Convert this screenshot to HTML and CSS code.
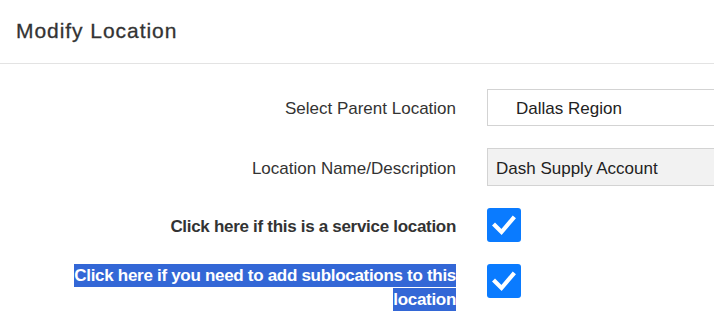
FILE: index.html
```html
<!DOCTYPE html>
<html>
<head>
<meta charset="utf-8">
<link rel="stylesheet" href="styles.css">
</head>
<body>
<div class="page">
  <header class="header">
    <h1 class="title">Modify Location</h1>
  </header>
  <form class="form">
    <div class="row row-center">
      <label class="label">Select Parent Location</label>
      <div class="field field-select">Dallas Region</div>
    </div>
    <div class="row row-center">
      <label class="label">Location Name/Description</label>
      <div class="field field-text">Dash Supply Account</div>
    </div>
    <div class="row row-center">
      <label class="label label-strong">Click here if this is a service location</label>
      <span class="check"><svg viewBox="0 0 34 34" width="34" height="34"><path d="M8 17.5 L14.5 24 L26 10.5" fill="none" stroke="#fff" stroke-width="4.2" stroke-linecap="square" stroke-linejoin="miter"/></svg></span>
    </div>
    <div class="row row-start">
      <label class="label label-strong label-sel"><span class="selected">Click here if you need to add sublocations to this location</span></label>
      <span class="check"><svg viewBox="0 0 34 34" width="34" height="34"><path d="M8 17.5 L14.5 24 L26 10.5" fill="none" stroke="#fff" stroke-width="4.2" stroke-linecap="square" stroke-linejoin="miter"/></svg></span>
    </div>
  </form>
</div>
</body>
</html>
```
FILE: styles.css
```css
html, body {
  margin: 0;
  padding: 0;
  background: #fff;
  overflow: hidden;
}
body {
  font-family: "Liberation Sans", Arial, sans-serif;
  color: #333;
}
.page {
  width: 714px;
}
.header {
  height: 63px;
  border-bottom: 1px solid #e3e3e3;
  display: flex;
  align-items: center;
  padding-left: 16px;
}
.title {
  margin: 0;
  margin-top: -2px;
  font-size: 21px;
  font-weight: 500;
  letter-spacing: 0.95px;
  color: #333;
  -webkit-text-stroke: 0.3px #333;
}
.form {
  display: flex;
  flex-direction: column;
  gap: 22px;
  padding-top: 25px;
}
.row {
  display: grid;
  grid-template-columns: 390px 1fr;
  column-gap: 31px;
  padding-left: 66px;
}
.row-center { align-items: center; }
.row-start { align-items: start; }
.label {
  text-align: right;
  font-size: 17px;
  line-height: 24px;
  color: #333;
  padding-top: 3px;
}
.label-sel {
  padding-top: 0;
}
.label-strong {
  font-weight: 700;
  letter-spacing: -0.3px;
}
.selected {
  background: #3367d6;
  color: #fff;
  padding: 2px 0;
  -webkit-box-decoration-break: clone;
  box-decoration-break: clone;
}
.field {
  box-sizing: border-box;
  border: 1px solid #d3d3d3;
  border-right: none;
  font-size: 17px;
  color: #222;
  display: flex;
  align-items: center;
  padding-top: 3px;
}
.field-select {
  height: 37px;
  background: #fff;
  padding-left: 28px;
}
.field-text {
  height: 38px;
  background: #f2f2f2;
  padding-left: 8px;
}
.check {
  width: 34px;
  height: 34px;
  border-radius: 3px;
  background: #0a7bff;
  display: block;
}
.check svg { display: block; }
```
